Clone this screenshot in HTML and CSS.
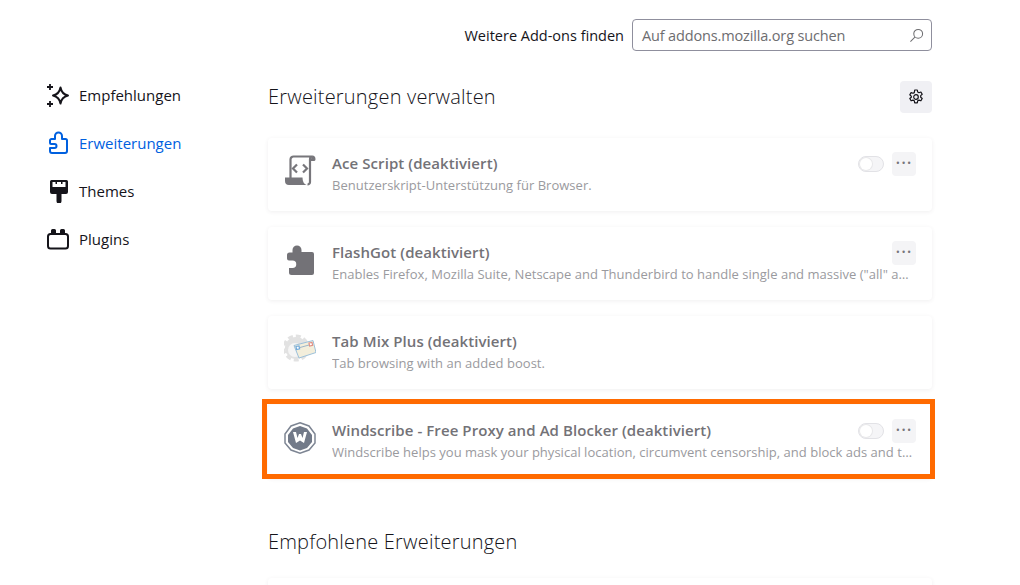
FILE: index.html
```html
<!DOCTYPE html>
<html lang="de">
<head>
<meta charset="utf-8">
<title>Add-ons-Verwaltung</title>
<link rel="stylesheet" href="styles.css">
</head>
<body>
<div class="page">
  <nav class="sidebar">
    <a class="nav-item">
      <svg class="nav-icon" viewBox="0 0 24 24" fill="none" stroke="#15141a" stroke-width="2" stroke-linejoin="round"><path d="M14.500 4.500c.8 4.500 3 7 7.500 8-4.500 1-6.700 3.500-7.500 8-.8-4.500-3-7-7.500-8 4.500-1 6.700-3.500 7.500-8z"/><path d="M4 1v6M1 4h6M4 18v6M1 21h6" stroke-width="1.800"/></svg>
      <span>Empfehlungen</span>
    </a>
    <a class="nav-item active">
      <svg class="nav-icon" viewBox="0 0 24 24" fill="none" stroke="#0060df" stroke-width="2" stroke-linejoin="round"><path d="M9 8V5a3.500 3.500 0 0 1 7 0v3h3.500A1.500 1.500 0 0 1 21 9.500V20a2 2 0 0 1-2 2H6a2 2 0 0 1-2-2v-3h4.500a2 2 0 0 0 0-4H5a1 1 0 0 1-1-1V9.500A1.500 1.500 0 0 1 5.500 8z"/></svg>
      <span>Erweiterungen</span>
    </a>
    <a class="nav-item">
      <svg class="nav-icon" viewBox="0 0 24 24"><path fill="#15141a" d="M5.500 1h15A1.500 1.500 0 0 1 22 2.500V13a2 2 0 0 1-2 2h-4.500v7a2.500 2.500 0 0 1-5 0v-7H6a2 2 0 0 1-2-2V2.500A1.500 1.500 0 0 1 5.500 1z"/><path fill="#fff" d="M6.500 3h3v2h1.500V3h4v2h1.500V3h3v5h-13z"/></svg>
      <span>Themes</span>
    </a>
    <a class="nav-item">
      <svg class="nav-icon" viewBox="0 0 24 24"><path fill="#15141a" d="M5 7V3.500A1.500 1.500 0 0 1 6.500 2h2A1.500 1.500 0 0 1 10 3.500V7zM14 7V3.500A1.500 1.500 0 0 1 15.500 2h2A1.500 1.500 0 0 1 19 3.500V7z"/><rect x="2" y="7" width="20" height="14.500" rx="2.500" fill="none" stroke="#15141a" stroke-width="2"/></svg>
      <span>Plugins</span>
    </a>
  </nav>
  <main class="content">
    <div class="topbar">
      <span class="find-label">Weitere Add-ons finden</span>
      <div class="search">
        <span>Auf addons.mozilla.org suchen</span>
        <svg class="search-icon" viewBox="0 0 16 16" fill="none" stroke="#6d6d70" stroke-width="1.100"><circle cx="9.800" cy="6.200" r="4.700"/><path d="M6.300 9.700 1.500 14.500"/></svg>
      </div>
    </div>
    <div class="heading-row">
      <h1>Erweiterungen verwalten</h1>
      <button class="gear-btn" aria-label="Einstellungen">
        <svg viewBox="0 0 16 16" fill="none" stroke="#15141a" stroke-width="1.200" stroke-linejoin="round"><circle cx="8" cy="8" r="2.300"/><path d="M6.700 1h2.600l.4 2 1.300.7 1.900-.7 1.300 2.300-1.500 1.300v1.600l1.500 1.300-1.300 2.300-1.900-.7-1.300.7-.4 2H6.700l-.4-2-1.300-.7-1.900.7-1.300-2.300 1.500-1.300V7.200L1.800 5.900l1.300-2.300 1.900.7 1.300-.7z"/></svg>
      </button>
    </div>
    <div class="card-list">
      <article class="card">
        <svg class="addon-icon" viewBox="0 0 32 32" fill="none"><path d="M6.500 23V4.500A3 3 0 0 1 9.500 1.500h19c-1.500 0-2.500 1-2.500 3V27a2.500 2.500 0 0 1-2.500 2.500" stroke="#77767b" stroke-width="2.200"/><path d="M28.500 .5c1.700 0 3 1.500 3 3.500 0 1-.5 2-1.200 2H26z" fill="#77767b"/><path d="M1 22.500h17.500c0 4 1.500 6.500 4 7.500H5a4 4 0 0 1-4-4z" fill="#77767b"/><path d="m13 9.500-4 4 4 4M19 9.500l4 4-4 4" stroke="#77767b" stroke-width="2.200"/></svg>
        <div class="card-text">
          <div class="card-title">Ace Script (deaktiviert)</div>
          <div class="card-desc">Benutzerskript-Unterstützung für Browser.</div>
        </div>
        <div class="card-actions">
          <span class="toggle"></span>
          <button class="more-btn" aria-label="Mehr">•••</button>
        </div>
      </article>
      <article class="card">
        <svg class="addon-icon" viewBox="0 0 32 32"><path fill="#737277" d="M13 1.500a4.500 4.500 0 0 1 4.500 4.500v2H28a2 2 0 0 1 2 2v19a2 2 0 0 1-2 2H7.500a2.500 2.500 0 0 1-2.500-2.500V24h3.500a3.500 3.500 0 0 0 0-7.500H5a2 2 0 0 1-2-2V11a2.500 2.500 0 0 1 2.500-2.500h3V6A4.500 4.500 0 0 1 13 1.500z"/></svg>
        <div class="card-text">
          <div class="card-title">FlashGot (deaktiviert)</div>
          <div class="card-desc">Enables Firefox, Mozilla Suite, Netscape and Thunderbird to handle single and massive ("all" and "a selection") downloads</div>
        </div>
        <div class="card-actions">
          <button class="more-btn" aria-label="Mehr">•••</button>
        </div>
      </article>
      <article class="card">
        <svg class="addon-icon" viewBox="0 0 32 32"><circle cx="12" cy="15" r="11" fill="#e2e2e2"/><circle cx="12" cy="15" r="12" fill="none" stroke="#e2e2e2" stroke-width="3" stroke-dasharray="5 3"/><circle cx="11" cy="17" r="7" fill="#f5f5f5"/><path fill="#f3eedb" stroke="#9cc0da" d="M10 12.500 29 7.500l3 12-17 5.500z"/><path fill="#fff" stroke="#72aadb" stroke-width="1.200" d="M12 13.500l3-.6.6 3-3 .6z"/><path fill="#fff" stroke="#e08f84" stroke-width="1.200" d="M25 10l3-.6.6 3-3 .6z"/><path stroke="#9db5c8" fill="none" d="M16 14.500l9-2.500"/></svg>
        <div class="card-text">
          <div class="card-title">Tab Mix Plus (deaktiviert)</div>
          <div class="card-desc">Tab browsing with an added boost.</div>
        </div>
      </article>
      <article class="card highlighted">
        <svg class="addon-icon" viewBox="0 0 32 32"><path fill="none" stroke="#7d8593" stroke-width="1.500" d="M16 .8 25 4l6 8v9l-6 7-9 3.200L7 28l-6-7v-9l6-8z"/><path fill="#727a89" d="M16 4 23 6.500l5 6.500v7l-5 6-7 2.500L9 26l-5-6v-7l5-6.500z"/><path fill="#fff" d="M9 10h3l1.500 6 1.500-4h2l1.500 4L20 10h3l-3 11-4-2.500-4 2.500z"/></svg>
        <div class="card-text">
          <div class="card-title">Windscribe - Free Proxy and Ad Blocker (deaktiviert)</div>
          <div class="card-desc">Windscribe helps you mask your physical location, circumvent censorship, and block ads and trackers on websites you use every day.</div>
        </div>
        <div class="card-actions">
          <span class="toggle"></span>
          <button class="more-btn" aria-label="Mehr">•••</button>
        </div>
      </article>
    </div>
    <h2>Empfohlene Erweiterungen</h2>
    <div class="card"></div>
  </main>
</div>
</body>
</html>
```
FILE: styles.css
```css
* { box-sizing: border-box; }
html, body { margin: 0; height: 585px; overflow: hidden; background: #fff; }
body { font-family: "Open Sans", "Noto Sans", sans-serif; color: #15141a; }
.page { display: flex; height: 585px; overflow: hidden; }
.sidebar { width: 268px; flex: none; padding: 71px 0 0 46px; display: flex; flex-direction: column; }
.nav-item { height: 48px; display: flex; align-items: center; gap: 9px; font-size: 15px; color: #15141a; }
.nav-item.active { color: #0060df; }
.nav-icon { width: 24px; height: 24px; flex: none; }
.content { width: 664px; flex: none; }
.topbar { display: flex; align-items: center; justify-content: flex-end; gap: 8px; padding-top: 19px; height: 51px; }
.find-label { font-size: 14.500px; }
.search { width: 300px; height: 32px; border: 1px solid #8f8f9d; border-radius: 4px; display: flex; align-items: center; justify-content: space-between; padding: 0 7px 0 9px; font-size: 14.500px; letter-spacing: -.15px; color: #6d6d70; }
.search-icon { width: 15px; height: 15px; }
.heading-row { display: flex; align-items: center; justify-content: space-between; margin-top: 30px; height: 32px; }
h1, h2 { margin: 0; font-weight: 300; font-size: 20px; letter-spacing: .2px; color: #15141a; }
h1 { margin-bottom: 1px; }
.gear-btn { width: 32px; height: 32px; padding: 8px; border: 0; border-radius: 4px; background: #f0f0f4; display: flex; }
.gear-btn svg { width: 16px; height: 16px; }
.card-list { display: flex; flex-direction: column; gap: 16px; margin-top: 25px; position: relative; }
.card { height: 73px; border-radius: 4px; background: #fff; box-shadow: 0 1px 4px rgba(58, 57, 68, .08); display: flex; align-items: flex-start; padding: 14px 16px 0 16px; position: relative; }
.addon-icon { width: 32px; height: 32px; flex: none; margin-top: 3px; }
.card-text { flex: 1; min-width: 0; margin-left: 16px; position: relative; }
.card-title { font-size: 15px; line-height: 22px; font-weight: 600; letter-spacing: .08px; color: #737277; white-space: nowrap; }
.card-desc { margin-top: 1px; font-size: 13px; line-height: 20px; letter-spacing: .02px; color: #9a9a9e; white-space: nowrap; overflow: hidden; text-overflow: ellipsis; }
.card-actions { position: absolute; top: 14px; right: 16px; display: flex; align-items: center; gap: 8px; }
.toggle { width: 26px; height: 16px; border: 1px solid #e2e2e6; border-radius: 8px; background: #f5f5f7; position: relative; }
.toggle::before { content: ""; position: absolute; left: 1px; top: 1px; width: 12px; height: 12px; border-radius: 50%; background: #fff; box-shadow: 0 0 0 1px #e8e8ea; }
.more-btn { width: 24px; height: 24px; padding: 0; border: 0; border-radius: 4px; background: #f4f4f6; color: #77767b; font: 8px/24px "DejaVu Sans", sans-serif; letter-spacing: 1px; text-align: center; }
.highlighted::after { content: ""; position: absolute; left: -6px; right: -3px; top: -6px; bottom: -1px; border: 5px solid #ff6a00; pointer-events: none; }
h2 { margin-top: 50px; line-height: 27px; }
h2 + .card { margin-top: 23px; }
```
